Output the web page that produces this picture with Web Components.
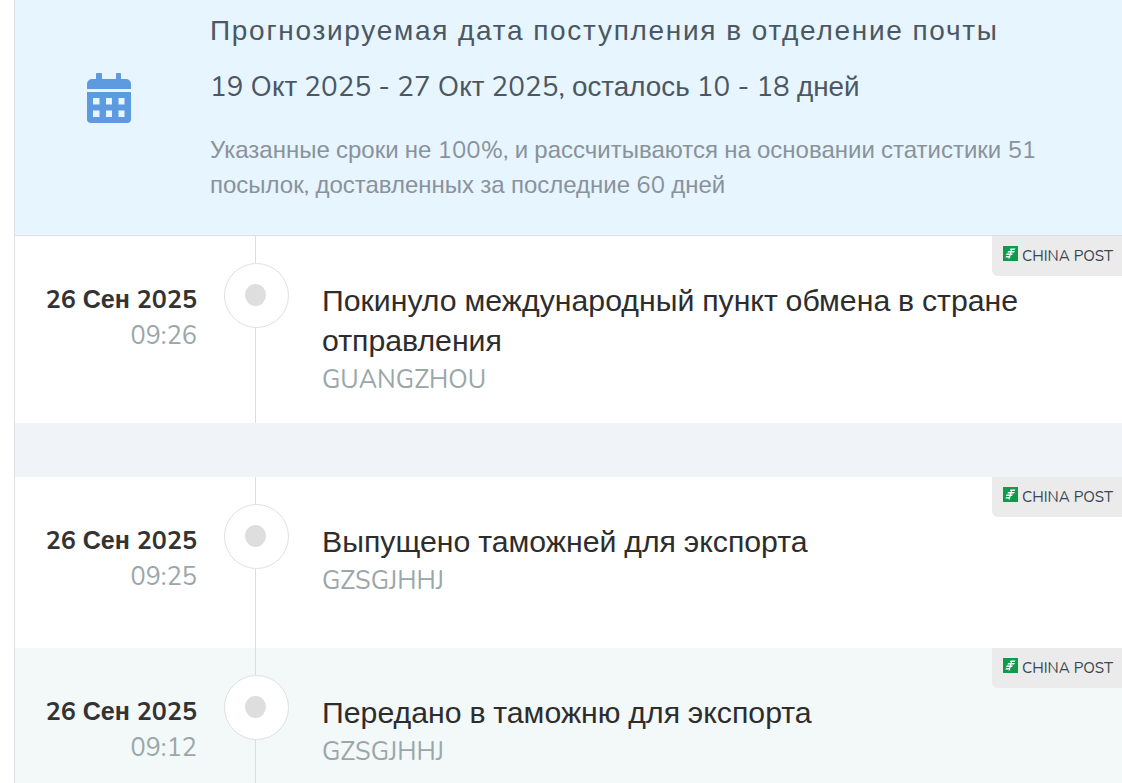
<!DOCTYPE html>
<html lang="ru">
<head>
<meta charset="utf-8">
<title>Трекинг</title>
<style>
html, body { margin: 0; height: 783px; overflow: hidden; background: #fff; }
body { font-family: Nunito, sans-serif; }
</style>
</head>
<body>
<track-panel>
    <eta-banner
        title-text="Прогнозируемая дата поступления в отделение почты"
        range="19 Oкт 2025 - 27 Oкт 2025, осталось 10 - 18 дней"
        note="Указанные сроки не 100%, и рассчитываются на основании статистики 51 посылок, доставленных за последние 60 дней"></eta-banner>
    <track-event date="26 Сен 2025" time="09:26" place="GUANGZHOU" pad="25"><mixed-text>Покинуло международный пункт обмена в стране отправления</mixed-text></track-event>
    <track-gap></track-gap>
    <track-event date="26 Сен 2025" time="09:25" place="GZSGJHHJ" pad="49"><mixed-text>Выпущено таможней для экспорта</mixed-text></track-event>
    <track-event date="26 Сен 2025" time="09:12" place="GZSGJHHJ" pad="49" tinted><mixed-text>Передано в таможню для экспорта</mixed-text></track-event>
</track-panel>

<script>
// Nunito here has no cyrillic on the real site, so cyrillic runs fall back to Arial metrics
class MixedText extends HTMLElement {
    connectedCallback() {
        const runs = this.textContent.replace(/[\u0400-\u04FF]+/g, m => `<span>${m}</span>`);
        this.attachShadow({ mode: 'open' }).innerHTML = `
            <style>
                :host { display: inline; font-family: Nunito, sans-serif; }
                span { font-family: "Liberation Sans", Arial, sans-serif; }
            </style>${runs}`;
    }
}

class TrackPanel extends HTMLElement {
    constructor() {
        super();
        this.attachShadow({ mode: 'open' }).innerHTML = `
            <style>
                :host { display: block; margin-left: 14px; border-left: 1px solid #dde1e6; }
            </style>
            <slot></slot>
        `;
    }
}

class EtaBanner extends HTMLElement {
    connectedCallback() {
        this.attachShadow({ mode: 'open' }).innerHTML = `
            <style>
                :host { display: grid; grid-template-columns: 195px 1fr; height: 235px;
                        background: #e6f5ff; border-bottom: 1px solid #dde1e6; }
                .icon { padding: 73px 0 0 72px; }
                svg { width: 44px; height: 50px; display: block; }
                .title { margin: 14px 0 0; font-size: 28px; line-height: 34px; letter-spacing: 1.71px; color: #4c5761; font-weight: 400; white-space: nowrap; }
                .range { margin: 22px 0 0; font-size: 27.830px; line-height: 34px; color: #4c5761; white-space: nowrap; }
                .note { margin: 29px 0 0; font-size: 24px; line-height: 34.500px; color: #8a929b; width: 860px; }
            </style>
            <div class="icon">
                <svg viewBox="0 0 44 50">
                    <path fill="#5e9ae0" d="M10 0h4a1 1 0 0 1 1 1v5h14V1a1 1 0 0 1 1-1h3a1 1 0 0 1 1 1v5h5a5 5 0 0 1 5 5v5H0v-5a5 5 0 0 1 5-5h4V1a1 1 0 0 1 1-1z"/>
                    <path fill="#5e9ae0" fill-rule="evenodd" d="M0 19h44v27a4 4 0 0 1-4 4H4a4 4 0 0 1-4-4zM6 25v6.500h6.500V25zM19 25v6.500h6V25zM31.500 25v6.500h6V25zM6 37.500V44h6.500v-6.500zM19 37.500V44h6v-6.500zM31.500 37.500V44h6v-6.500z"/>
                </svg>
            </div>
            <div>
                <h2 class="title"><mixed-text>${this.getAttribute('title-text')}</mixed-text></h2>
                <div class="range"><mixed-text>${this.getAttribute('range')}</mixed-text></div>
                <div class="note"><mixed-text>${this.getAttribute('note')}</mixed-text></div>
            </div>
        `;
    }
}

class TrackGap extends HTMLElement {
    constructor() {
        super();
        this.attachShadow({ mode: 'open' }).innerHTML = `
            <style>:host { display: block; height: 54px; background: #f0f3f7; }</style>
        `;
    }
}

class CarrierBadge extends HTMLElement {
    constructor() {
        super();
        this.attachShadow({ mode: 'open' }).innerHTML = `
            <style>
                :host { position: absolute; top: 0; right: 0; width: 130px; height: 40px; box-sizing: border-box;
                        display: flex; align-items: flex-start; padding: 10px 0 0 11px; gap: 4px;
                        background: #ebebeb; border-bottom-left-radius: 6px;
                        font: 15.150px/20px Nunito, sans-serif; color: #3c4650; }
                svg { width: 15px; height: 15px; display: block; flex: none; }
            </style>
            <svg viewBox="0 0 15 15">
                <rect width="15" height="15" fill="#109a49"/>
                <path fill="#fff" d="M7.500 2.500h5l-1 1.500h-4.500zM5 5h7l-1 1.500H4.500zM3.500 7.500h6.500l-1 1.500H3zM3 10h4l-.500 1.500H2.500z"/>
                <path fill="#fff" d="M8 3 5.500 12.500h1.300L9.300 3z"/>
            </svg>
            <slot></slot>
        `;
    }
}

class TrackEvent extends HTMLElement {
    connectedCallback() {
        const tinted = this.hasAttribute('tinted');
        this.attachShadow({ mode: 'open' }).innerHTML = `
            <style>
                :host { display: grid; grid-template-columns: 182px 1fr; position: relative;
                        background: ${tinted ? '#f3f8f9' : '#fff'}; font-family: Nunito, sans-serif; }
                .when { text-align: right; padding-top: 46px; }
                .date { font-size: 25.100px; line-height: 34px; font-weight: 700; color: #333; }
                .time { font-size: 25.300px; line-height: 38px; color: #9aa7a9; }
                .rail { position: absolute; left: 240px; top: 0; bottom: 0; width: 1px; background: #ddd; }
                .node { position: absolute; left: 209px; top: 27px; width: 65px; height: 65px; box-sizing: border-box;
                        border: 1px solid #e0e0e0; border-radius: 50%; background: #fff;
                        display: flex; align-items: center; justify-content: center; }
                .node i { width: 21px; height: 22px; border-radius: 50%; background: #dedede; transform: translate(-1px, -1px); }
                .body { padding: 45px 60px ${this.getAttribute('pad')}px 125px; }
                .msg { font-size: 30.250px; line-height: 39px; color: #2d2d2d; }
                .place { font-size: 25.300px; line-height: 37px; color: #9aa7a9; }
            </style>
            <div class="rail"></div>
            <div class="node"><i></i></div>
            <div class="when">
                <div class="date"><mixed-text>${this.getAttribute('date')}</mixed-text></div>
                <div class="time">${this.getAttribute('time')}</div>
            </div>
            <div class="body">
                <div class="msg"><slot></slot></div>
                <div class="place">${this.getAttribute('place')}</div>
            </div>
            <carrier-badge>CHINA POST</carrier-badge>
        `;
    }
}

customElements.define('mixed-text', MixedText);
customElements.define('track-panel', TrackPanel);
customElements.define('eta-banner', EtaBanner);
customElements.define('track-gap', TrackGap);
customElements.define('carrier-badge', CarrierBadge);
customElements.define('track-event', TrackEvent);
</script>
</body>
</html>
